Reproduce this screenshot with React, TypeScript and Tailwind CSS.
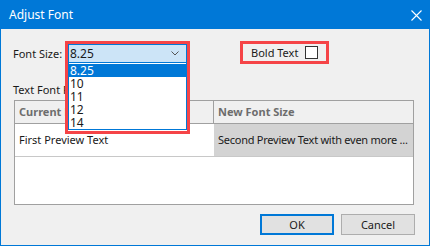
import React from "react";

export default function App() {
  const items = ["8.25", "10", "11", "12", "14"];
  return (
    <div className="w-[430px] h-[246px] flex flex-col bg-[#0078d7] px-px pb-px font-['Noto_Sans',sans-serif] text-[11px] leading-[16px] text-[#1a1a1a]">
      <div className="h-[29px] shrink-0 flex items-center justify-between pl-[8px] pr-[7px] text-white text-[12px]">
        <span>Adjust Font</span>
        <svg width="11" height="11" viewBox="0 0 11 11" className="mt-px">
          <path d="M0.5 0.5 L10.5 10.5 M10.5 0.5 L0.5 10.5" stroke="white" strokeWidth="1.1" />
        </svg>
      </div>
      <div className="flex-1 bg-[#f0f0f0] flex flex-col">
        <div className="flex items-start mt-[12px] h-[22px]">
          <span className="ml-[12px] w-[55px] mt-[3px] leading-[19px] whitespace-nowrap">Font Size:</span>
          <div className="relative z-10 mt-[3px] w-[119px] h-[19px] border border-[#0078d7] bg-[#cce4f7] flex items-center justify-between pl-[1px] pr-[7px]">
            <span className="leading-[16px] text-[12px]">8.25</span>
            <svg width="8" height="5" viewBox="0 0 8 5">
              <path d="M0.5 0.5 L4 4 L7.5 0.5" stroke="#555" strokeWidth="1" fill="none" />
            </svg>
            <div className="absolute left-[-1px] top-[17px] w-[119px] h-[68px] border border-[#0078d7] bg-white flex flex-col py-[1px] text-[12px]">
              {items.map((it, i) => (
                <div
                  key={it}
                  className={
                    i === 0
                      ? "h-[13px] leading-[13px] pl-[1px] bg-[#0078d7] text-white"
                      : "h-[13px] leading-[13px] pl-[1px] text-[#1a1a1a]"
                  }
                >
                  {it}
                </div>
              ))}
            </div>
            <div className="pointer-events-none absolute left-[-4px] top-[-4px] w-[125px] h-[93px] border-[3px] border-[#f54447]" />
          </div>
          <div className="ml-[53px] w-[89px] h-[23px] border-[3px] border-[#f54447] flex items-center justify-between px-[8px]">
            <span className="whitespace-nowrap">Bold Text</span>
            <div className="w-[13px] h-[13px] border border-[#333333] bg-white" />
          </div>
        </div>
        <div className="ml-[12px] mt-[19px] h-[16px] whitespace-nowrap">Text Font Preview:</div>
        <div className="ml-[13px] mt-[2px] w-[400px] h-[105px] border border-[#a0a0a0] bg-white flex flex-col">
          <div className="flex h-[23px] border-b border-[#a0a0a0] bg-[#f0f0f0] font-bold text-[#6d6d6d]">
            <div className="w-[199px] border-r border-[#a0a0a0] pl-[4px] flex items-center whitespace-nowrap">Current Font Size</div>
            <div className="flex-1 pl-[4px] flex items-center whitespace-nowrap">New Font Size</div>
          </div>
          <div className="flex h-[33px] border-b border-[#c8c8c8]">
            <div className="w-[199px] pl-[4px] flex items-center bg-white whitespace-nowrap">First Preview Text</div>
            <div className="flex-1 pl-[4px] flex items-center bg-[#d3d3d3] whitespace-nowrap overflow-hidden tracking-[-0.25px]">Second Preview Text with even more ...</div>
          </div>
        </div>
        <div className="flex justify-end gap-[7px] mt-[9px] pr-[14px]">
          <div className="w-[74px] h-[21px] border-2 border-[#0078d7] bg-[#e1e1e1] flex items-center justify-center">OK</div>
          <div className="w-[74px] h-[21px] border border-[#adadad] bg-[#e1e1e1] flex items-center justify-center">Cancel</div>
        </div>
      </div>
    </div>
  );
}
